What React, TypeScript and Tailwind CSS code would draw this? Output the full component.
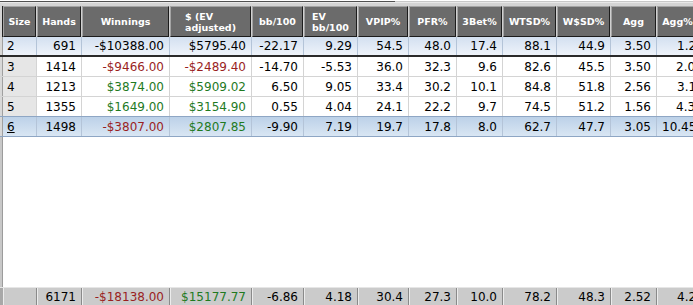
import React from "react";

const W = [34, 45, 88, 82, 52, 54, 51, 48, 46, 54, 54, 46, 42];

const headers: (string | string[])[] = [
  "Size",
  "Hands",
  "Winnings",
  ["$ (EV", "adjusted)"],
  "bb/100",
  ["EV", "bb/100"],
  "VPIP%",
  "PFR%",
  "3Bet%",
  "WTSD%",
  "W$SD%",
  "Agg",
  "Agg%",
];

type Row = { cells: string[]; kind: "top" | "plain" | "sel"; aggPl: string };

const rows: Row[] = [
  { cells: ["2", "691", "-$10388.00", "$5795.40", "-22.17", "9.29", "54.5", "48.0", "17.4", "88.1", "44.9", "3.50", "1.24"], kind: "top", aggPl: "pl-[20px]" },
  { cells: ["3", "1414", "-$9466.00", "-$2489.40", "-14.70", "-5.53", "36.0", "32.3", "9.6", "82.6", "45.5", "3.50", "2.05"], kind: "plain", aggPl: "pl-[19px]" },
  { cells: ["4", "1213", "$3874.00", "$5909.02", "6.50", "9.05", "33.4", "30.2", "10.1", "84.8", "51.8", "2.56", "3.17"], kind: "plain", aggPl: "pl-[20px]" },
  { cells: ["5", "1355", "$1649.00", "$3154.90", "0.55", "4.04", "24.1", "22.2", "9.7", "74.5", "51.2", "1.56", "4.33"], kind: "plain", aggPl: "pl-[19px]" },
  { cells: ["6", "1498", "-$3807.00", "$2807.85", "-9.90", "7.19", "19.7", "17.8", "8.0", "62.7", "47.7", "3.05", "10.45"], kind: "sel", aggPl: "pl-[5px]" },
];

const footer = ["", "6171", "-$18138.00", "$15177.77", "-6.86", "4.18", "30.4", "27.3", "10.0", "78.2", "48.3", "2.52", "4.29"];

function moneyColor(v: string) {
  if (!v.includes("$")) return "text-black";
  return v.startsWith("-") ? "text-[#9a1f1f]" : "text-[#1f7a1f]";
}

export default function App() {
  return (
    <div className="w-[693px] h-[305px] overflow-hidden bg-white flex flex-col font-['DejaVu_Sans',sans-serif] text-[12px] text-black">
      {/* top strip */}
      <div className="h-[3px] shrink-0 bg-white flex flex-col">
        <div className="h-px bg-white" />
        <div className="h-px flex">
          <div className="w-[395px] bg-[#505050]" />
          <div className="flex-1 bg-[#c8c8c8]" />
        </div>
        <div className="h-px bg-[#e8e8e8]" />
      </div>

      {/* header */}
      <div className="h-[34px] shrink-0 flex bg-[#d4d4d4] pt-[3px]">
        <div className="w-[3px] shrink-0 flex">
          <div className="w-[2px] bg-[#d4d4d4]" />
          <div className="w-px bg-[#202020]" />
        </div>
        {headers.map((h, i) => (
          <div key={i} style={{ width: W[i] }} className="shrink-0 h-full pr-px bg-[#d0d0d0]">
            <div className="h-full border-l border-t border-l-[#a4a4a4] border-t-[#a4a4a4] border-r border-b border-r-[#1c1c1c] border-b-[#1c1c1c] bg-[#6b6b6b] flex items-center justify-center text-white font-bold text-[9.5px] leading-[11px] overflow-hidden whitespace-nowrap">
              {Array.isArray(h) ? (
                <span className="text-left">
                  {h[0]}
                  <br />
                  {h[1]}
                </span>
              ) : (
                <span>{h}</span>
              )}
            </div>
          </div>
        ))}
      </div>

      {/* body rows */}
      {rows.map((r, ri) => {
        const rowCls =
          r.kind === "top"
            ? "h-[20px] border-b-2 border-b-[#2a2a2a] bg-gradient-to-b from-[#d3e0f0] to-[#eef3fa]"
            : r.kind === "sel"
            ? "h-[20px] border-b border-b-[#8ea6c4] bg-gradient-to-b from-[#bcd1e8] to-[#d9e6f3]"
            : ri === 3
            ? "h-[20px] border-b border-b-[#8ea6c4] bg-white"
            : "h-[20px] border-b border-b-[#d4d4d4] bg-white";
        const vline = r.kind === "plain" ? "border-r-[#d4d4d4]" : "border-r-[#b4c4d8]";
        return (
          <div key={ri} className={`shrink-0 flex ${rowCls}`}>
            <div className="w-[3px] shrink-0 bg-[#d8d8d8] border-r border-r-[#a0a0a0]" />
            {r.cells.map((c, ci) => {
              const isSize = ci === 0;
              const isAgg = ci === 12;
              const color = r.kind === "top" ? "text-black" : moneyColor(c);
              const sizeBg = isSize && r.kind === "plain" ? "bg-[#e6e6e6]" : "";
              return (
                <div
                  key={ci}
                  style={{ width: W[ci] }}
                  className={`shrink-0 h-full border-r ${vline} ${sizeBg} flex items-center whitespace-nowrap overflow-hidden ${
                    isSize ? "justify-start pl-[4px]" : isAgg ? `justify-start ${r.aggPl}` : "justify-end pr-[5px]"
                  } ${color}`}
                >
                  {isSize && r.kind === "sel" ? <span className="underline">{c}</span> : c}
                </div>
              );
            })}
          </div>
        );
      })}

      {/* empty area */}
      <div className="flex-1 flex">
        <div className="w-[3px] shrink-0 bg-[#c8c8c8] border-r border-r-[#9c9c9c]" />
        <div className="flex-1 bg-white" />
      </div>

      {/* footer totals */}
      <div className="h-[18px] shrink-0 flex bg-[#cbcbcb] border-t border-t-[#e6e6e6]">
        <div className="w-[3px] shrink-0 bg-[#a8a8a8]" />
        {footer.map((c, ci) => (
          <div
            key={ci}
            style={{ width: W[ci] }}
            className={`shrink-0 h-full border-l border-l-[#ececec] border-r border-r-[#8a8a8a] flex items-center whitespace-nowrap overflow-hidden ${
              ci === 12 ? "justify-start pl-[19px]" : "justify-end pr-[5px]"
            } ${moneyColor(c)}`}
          >
            {c}
          </div>
        ))}
      </div>
    </div>
  );
}
